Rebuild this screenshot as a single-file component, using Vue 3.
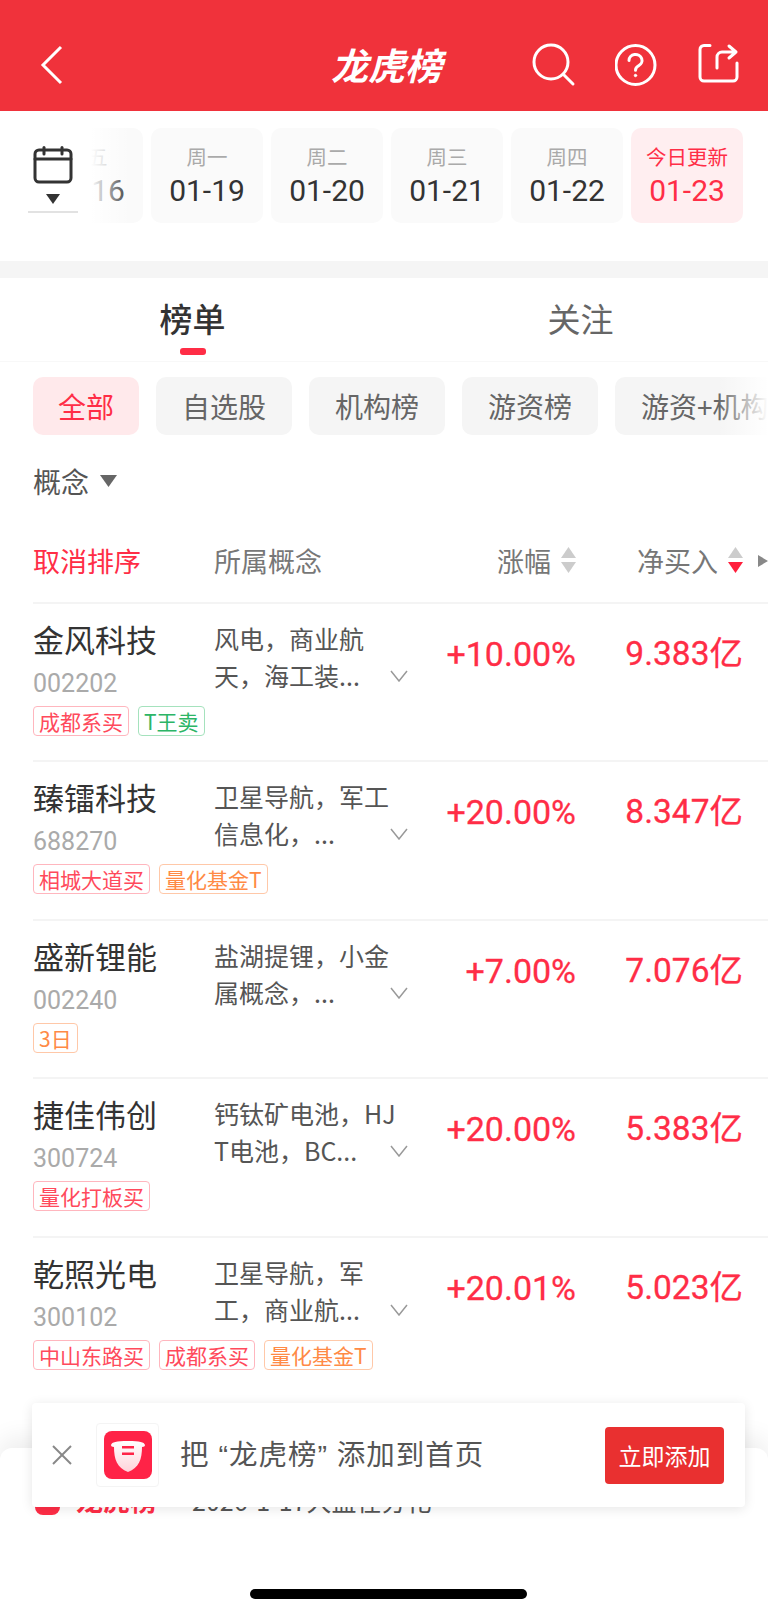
<script setup>
const dates = [
  { week: '周五', day: '01-16' },
  { week: '周一', day: '01-19' },
  { week: '周二', day: '01-20' },
  { week: '周三', day: '01-21' },
  { week: '周四', day: '01-22' },
  { week: '今日更新', day: '01-23', active: true },
]

const chips = ['全部', '自选股', '机构榜', '游资榜', '游资+机构']

const rows = [
  {
    name: '金风科技', code: '002202',
    lines: ['风电，商业航', '天，海工装...'],
    pct: '+10.00%', buy: '9.383亿',
    tags: [{ t: '成都系买', c: 'red' }, { t: 'T王卖', c: 'green' }],
  },
  {
    name: '臻镭科技', code: '688270',
    lines: ['卫星导航，军工', '信息化，...'],
    pct: '+20.00%', buy: '8.347亿',
    tags: [{ t: '相城大道买', c: 'red' }, { t: '量化基金T', c: 'orange' }],
  },
  {
    name: '盛新锂能', code: '002240',
    lines: ['盐湖提锂，小金', '属概念，...'],
    pct: '+7.00%', buy: '7.076亿',
    tags: [{ t: '3日', c: 'orange' }],
  },
  {
    name: '捷佳伟创', code: '300724',
    lines: ['钙钛矿电池，HJ', 'T电池，BC...'],
    pct: '+20.00%', buy: '5.383亿',
    tags: [{ t: '量化打板买', c: 'red' }],
  },
  {
    name: '乾照光电', code: '300102',
    lines: ['卫星导航，军', '工，商业航...'],
    pct: '+20.01%', buy: '5.023亿',
    tags: [{ t: '中山东路买', c: 'red' }, { t: '成都系买', c: 'red' }, { t: '量化基金T', c: 'orange' }],
  },
]
</script>

<template>
  <div class="page">
    <header class="topbar">
      <svg class="back" width="24" height="40" viewBox="0 0 24 40" fill="none" stroke="#fff" stroke-width="3">
        <polyline points="21,2 3,20 21,38" />
      </svg>
      <h1 class="title">龙虎榜</h1>
      <div class="actions">
        <svg width="44" height="44" viewBox="0 0 44 44" fill="none" stroke="#fff" stroke-width="3" stroke-linecap="round">
          <circle cx="19" cy="19" r="17" />
          <line x1="32" y1="32" x2="41" y2="41" />
        </svg>
        <svg width="44" height="44" viewBox="1.5 0 44 44" fill="none" stroke="#fff" stroke-width="3" stroke-linecap="round">
          <circle cx="22" cy="22" r="19.5" />
          <path d="M15.5 17.5a6.5 6 0 1 1 9.5 5.3c-2 1.1-3 2.3-3 4.5" />
          <circle cx="22" cy="32.5" r="1.2" fill="#fff" stroke-width="1" />
        </svg>
        <svg width="42" height="44" viewBox="0 0 42 44" fill="none" stroke="#fff" stroke-width="3" stroke-linecap="round" stroke-linejoin="round">
          <path d="M12 2.5H6a4 4 0 0 0-4 4V34a4 4 0 0 0 4 4H35a4 4 0 0 0 4-4V20" />
          <path d="M19 25V14a5 5 0 0 1 5-5H38M31 3l7 6-7 6" />
        </svg>
      </div>
    </header>

    <section class="dates">
      <div class="cal">
        <svg width="40" height="38" viewBox="0 0 40 38" fill="none" stroke="#333" stroke-width="3" stroke-linecap="round">
          <rect x="2" y="4" width="36" height="32" rx="4" />
          <line x1="2" y1="13" x2="38" y2="13" />
          <line x1="11" y1="1.5" x2="11" y2="8" />
          <line x1="29" y1="1.5" x2="29" y2="8" />
        </svg>
        <svg class="cal-arrow" width="14" height="10" viewBox="0 0 14 10"><polygon points="0,0 14,0 7,10" fill="#333" /></svg>
        <span class="cal-line"></span>
      </div>
      <div class="date-strip">
        <div v-for="d in dates" :key="d.day" class="date-card" :class="{ active: d.active }">
          <span class="week">{{ d.week }}</span>
          <span class="day">{{ d.day }}</span>
        </div>
        <span class="strip-fade"></span>
      </div>
    </section>

    <div class="gap-band"></div>

    <nav class="tabs">
      <div class="tab on">榜单<span class="tab-mark"></span></div>
      <div class="tab second">关注</div>
    </nav>

    <div class="chips">
      <span v-for="(c, i) in chips" :key="c" class="chip" :class="{ active: i === 0 }">{{ c }}</span>
      <span class="chips-fade"></span>
    </div>

    <div class="concept-filter">
      概念
      <svg width="17" height="12" viewBox="0 0 17 12"><polygon points="0,0 17,0 8.5,12" fill="#666" /></svg>
    </div>

    <div class="table-head">
      <span class="cancel">取消排序</span>
      <span>所属概念</span>
      <span class="sort">
        涨幅
        <svg width="15" height="26" viewBox="0 0 15 26">
          <polygon points="7.5,0 15,11 0,11" fill="#ccc" />
          <polygon points="0,15 15,15 7.5,26" fill="#ccc" />
        </svg>
      </span>
      <span class="sort">
        净买入
        <svg width="15" height="26" viewBox="0 0 15 26">
          <polygon points="7.5,0 15,11 0,11" fill="#ccc" />
          <polygon points="0,15 15,15 7.5,26" fill="#ff1f3c" />
        </svg>
      </span>
      <svg class="more" width="10" height="12" viewBox="0 0 10 12"><polygon points="0,0 10,6 0,12" fill="#888" /></svg>
    </div>

    <div v-for="r in rows" :key="r.code" class="row">
      <div class="stock">
        <div class="name">{{ r.name }}</div>
        <div class="code">{{ r.code }}</div>
        <div class="tags">
          <span v-for="t in r.tags" :key="t.t" class="tag" :class="t.c">{{ t.t }}</span>
        </div>
      </div>
      <div class="concepts">
        <div class="concept-lines">
          <div v-for="l in r.lines" :key="l">{{ l }}</div>
        </div>
        <svg class="chev" width="18" height="12" viewBox="0 0 18 12" fill="none" stroke="#999" stroke-width="1.5">
          <polyline points="1,1 9,11 17,1" />
        </svg>
      </div>
      <div class="num">{{ r.pct }}</div>
      <div class="num buy">{{ r.buy }}</div>
    </div>

    <div class="sheet">
      <span class="sheet-icon"></span>
      <span class="sheet-brand">龙虎榜</span>
      <span class="sheet-text">2026-1-17大盘在分化</span>
    </div>

    <div class="banner">
      <svg class="close" width="20" height="20" viewBox="0 0 20 20" stroke="#888" stroke-width="2">
        <line x1="1" y1="1" x2="19" y2="19" />
        <line x1="19" y1="1" x2="1" y2="19" />
      </svg>
      <div class="logo">
        <svg width="48" height="48" viewBox="0 0 48 48">
          <defs>
            <linearGradient id="shield" x1="0" y1="0" x2="0" y2="1">
              <stop offset="0" stop-color="#fff" />
              <stop offset="1" stop-color="#ffd3da" />
            </linearGradient>
          </defs>
          <rect width="48" height="48" rx="8" fill="#ff2347" />
          <path d="M7 14c1-3 5-4 17-4s16 1 17 4c0 1-1 2-3 2 0 12-3 21-14 25C13 37 10 28 10 16c-2 0-3-1-3-2z" fill="url(#shield)" />
          <rect x="18" y="15" width="12" height="2.5" fill="#ff2347" />
          <rect x="18" y="21.5" width="12" height="2.5" fill="#ff2347" />
        </svg>
      </div>
      <span class="banner-text">把 “龙虎榜” 添加到首页</span>
      <span class="banner-btn">立即添加</span>
    </div>

    <div class="home-bar"></div>
  </div>
</template>

<style scoped>
.page {
  position: relative;
  width: 768px;
  height: 1616px;
  overflow: hidden;
  background: #fff;
  font-family: "Noto Sans CJK SC", "Noto Sans", sans-serif;
  color: #333;
}

.topbar {
  display: flex;
  align-items: center;
  height: 111px;
  padding-top: 19px;
  box-sizing: border-box;
  background: #f0323b;
}
.back {
  margin-left: 40px;
}
.title {
  margin: 0 0 2px 267px;
  font-size: 37px;
  line-height: 44px;
  font-weight: 700;
  font-style: italic;
  color: #fff;
}
.actions {
  display: flex;
  gap: 39px;
  margin-left: auto;
  padding-right: 28px;
}

.dates {
  display: flex;
  height: 150px;
  padding-top: 17px;
  box-sizing: border-box;
}
.cal {
  display: flex;
  flex-direction: column;
  align-items: center;
  width: 50px;
  margin-left: 28px;
  margin-right: 13px;
  padding-top: 18px;
}
.cal-arrow {
  margin-top: 10px;
}
.cal-line {
  width: 50px;
  height: 2px;
  margin-top: 7px;
  background: #e2e2e2;
}
.date-strip {
  position: relative;
  display: flex;
  gap: 8px;
  flex: 1;
  height: 95px;
  overflow: hidden;
}
.date-card {
  display: flex;
  flex-direction: column;
  align-items: center;
  flex: none;
  width: 112px;
  height: 95px;
  border-radius: 10px;
  background: #fafafa;
}
.date-card:first-child {
  margin-left: -60px;
}
.week {
  margin-top: 15px;
  font-size: 20.5px;
  line-height: 26px;
  color: #aaa;
}
.day {
  margin-top: 4px;
  font-family: Roboto, sans-serif;
  font-size: 30px;
  line-height: 36px;
  color: #333;
}
.date-card.active {
  background: #ffeef0;
}
.date-card.active .week,
.date-card.active .day {
  color: #ff2d46;
}
.strip-fade {
  position: absolute;
  left: 0;
  top: 0;
  bottom: 0;
  width: 40px;
  background: linear-gradient(to right, #fff, rgba(255, 255, 255, 0));
}

.gap-band {
  height: 17px;
  background: #f5f5f5;
}

.tabs {
  display: flex;
  height: 84px;
  padding-left: 5px;
  box-sizing: border-box;
  border-bottom: 1px solid #f8f8f8;
}
.tab {
  display: flex;
  flex-direction: column;
  align-items: center;
  flex: 1;
  padding-top: 20px;
  font-size: 33px;
  line-height: 40px;
  color: #666;
}
.tab.second {
  padding-left: 13px;
}
.tab.on {
  color: #333;
  font-weight: 500;
}
.tab-mark {
  width: 26px;
  height: 7px;
  margin-top: 10px;
  border-radius: 3px;
  background: #ff2d46;
}

.chips {
  position: relative;
  display: flex;
  gap: 17px;
  margin-top: 15px;
  padding-left: 33px;
  overflow: hidden;
}
.chip {
  flex: none;
  padding: 0 26px;
  border-radius: 10px;
  background: #f5f5f5;
  font-size: 28px;
  line-height: 58px;
  color: #666;
}
.chip.active {
  padding: 0 25px;
  background: #ffe9eb;
  color: #ff2d46;
}
.chips-fade {
  position: absolute;
  right: 0;
  top: 0;
  bottom: 0;
  width: 50px;
  background: linear-gradient(to right, rgba(255, 255, 255, 0), #fff);
}

.concept-filter {
  display: flex;
  align-items: center;
  gap: 11px;
  margin-top: 26px;
  padding-left: 33px;
  font-size: 28px;
  line-height: 40px;
  color: #555;
}

.table-head,
.row {
  display: grid;
  grid-template-columns: 181px 194px 168px 167px;
  margin-left: 33px;
}
.table-head {
  position: relative;
  align-items: center;
  height: 40px;
  margin-top: 39px;
  margin-bottom: 22px;
  font-size: 27px;
  color: #777;
}
.cancel {
  color: #ff2d46;
}
.sort {
  display: flex;
  align-items: center;
  justify-content: flex-end;
  gap: 10px;
}
.more {
  position: absolute;
  right: 0;
  top: 15px;
}

.row {
  box-sizing: border-box;
  height: 158.4px;
  padding-top: 16px;
  border-top: 2px solid #f4f4f4;
}
.name {
  margin-top: -1px;
  font-size: 31px;
  line-height: 40px;
  color: #333;
}
.code {
  margin-top: 12px;
  font-family: Roboto, sans-serif;
  font-size: 25px;
  line-height: 26px;
  color: #aaa;
}
.tags {
  display: flex;
  gap: 9px;
  width: 400px;
  margin-top: 9px;
}
.tag {
  flex: none;
  padding: 0 5px;
  border: 1px solid;
  border-radius: 4px;
  font-size: 21px;
  line-height: 28px;
}
.tag.red {
  border-color: #ffb6be;
  color: #ff4a5c;
}
.tag.green {
  border-color: #a5e2bd;
  color: #2cb566;
}
.tag.orange {
  border-color: #ffc8a8;
  color: #ff8a45;
}

.concepts {
  display: flex;
  align-items: flex-end;
  justify-content: space-between;
  height: 74px;
  font-size: 25px;
  line-height: 37px;
  color: #555;
}
.concept-lines {
  width: 176px;
  white-space: nowrap;
}
.chev {
  flex: none;
  margin-bottom: 12px;
}
.num {
  padding-top: 14px;
  font-family: Roboto, "Noto Sans CJK SC", sans-serif;
  font-size: 34px;
  line-height: 40px;
  font-weight: 400;
  -webkit-text-stroke: 0.3px #ff2d46;
  text-align: right;
  color: #ff2d46;
}
.num.buy {
  font-size: 33.5px;
}

.sheet {
  position: absolute;
  left: 0;
  right: 0;
  top: 1448px;
  bottom: 0;
  display: flex;
  align-items: flex-start;
  padding: 32px 0 0 35px;
  border-radius: 12px 12px 0 0;
  background: #fff;
  box-shadow: 0 -10px 24px rgba(0, 0, 0, 0.07);
  font-size: 25px;
  line-height: 40px;
}
.sheet-icon {
  width: 25px;
  height: 35px;
  border-radius: 4px 4px 8px 8px;
  background: #ff2d46;
}
.sheet-brand {
  margin-left: 16px;
  font-size: 27px;
  color: #ff2d46;
  font-weight: 700;
}
.sheet-text {
  margin-left: 35px;
  color: #555;
}

.banner {
  position: absolute;
  left: 32px;
  top: 1403px;
  display: flex;
  align-items: center;
  width: 713px;
  height: 104px;
  border-radius: 4px;
  background: #fff;
  box-shadow: 0 2px 12px rgba(0, 0, 0, 0.1);
}
.close {
  margin-left: 20px;
}
.logo {
  display: flex;
  align-items: center;
  justify-content: center;
  width: 63px;
  height: 64px;
  margin-left: 24px;
  border: 1px solid #f4f4f4;
  border-radius: 4px;
  box-sizing: border-box;
}
.banner-text {
  margin-left: 21px;
  font-family: "Liberation Sans", "Noto Sans CJK SC", sans-serif;
  font-size: 28.5px;
  letter-spacing: 1px;
  line-height: 40px;
  color: #555;
}
.banner-btn {
  margin-left: auto;
  margin-right: 21px;
  width: 119px;
  border-radius: 4px;
  background: #e93030;
  font-size: 23px;
  line-height: 57px;
  text-align: center;
  color: #fff;
}

.home-bar {
  position: absolute;
  left: 250px;
  bottom: 17px;
  width: 277px;
  height: 10px;
  border-radius: 5px;
  background: #000;
}
</style>
